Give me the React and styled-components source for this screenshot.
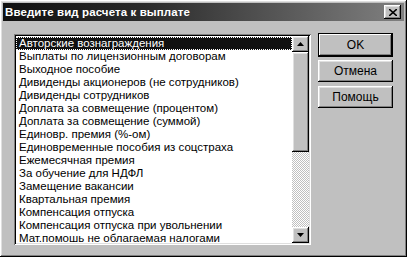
import React from 'react';
import styled, { createGlobalStyle } from 'styled-components';

const GlobalStyle = createGlobalStyle`
  html, body {
    margin: 0;
    padding: 0;
    background: #c0c0c0;
  }
  body {
    font-family: "Liberation Sans", Arial, sans-serif;
  }
`;

const items = [
  'Авторские вознаграждения',
  'Выплаты по лицензионным договорам',
  'Выходное пособие',
  'Дивиденды акционеров (не сотрудников)',
  'Дивиденды сотрудников',
  'Доплата за совмещение (процентом)',
  'Доплата за совмещение (суммой)',
  'Единовр. премия (%-ом)',
  'Единовременные пособия из соцстраха',
  'Ежемесячная премия',
  'За обучение для НДФЛ',
  'Замещение вакансии',
  'Квартальная премия',
  'Компенсация отпуска',
  'Компенсация отпуска при увольнении',
  'Мат.помошь не облагаемая налогами',
];

// raised 3d edge, win95 style
const raised = `
  box-shadow: inset -1px -1px 0 #000, inset 1px 1px 0 #fff,
    inset -2px -2px 0 #808080, inset 2px 2px 0 #dfdfdf;
`;

const Dialog = styled.div`
  box-sizing: border-box;
  width: 407px;
  height: 257px;
  background: #c0c0c0;
  padding: 3px;
  display: flex;
  flex-direction: column;
  ${raised}
`;

const TitleBar = styled.div`
  height: 18px;
  display: flex;
  align-items: center;
  justify-content: space-between;
  padding: 0 3px 0 2px;
  background: linear-gradient(to right, #101010 0%, #2a2a2a 35%, #808080 100%);
`;

const Title = styled.span`
  color: #fff;
  font-weight: bold;
  font-size: 11.5px;
  letter-spacing: 0.1px;
`;

const CloseButton = styled.div`
  box-sizing: border-box;
  width: 17px;
  height: 14px;
  background: #c0c0c0;
  display: flex;
  align-items: center;
  justify-content: center;
  ${raised}
`;

const Body = styled.div`
  display: flex;
  gap: 7px;
  padding: 13px 10px 0 11px;
`;

const ListBox = styled.div`
  box-sizing: border-box;
  width: 297px;
  height: 211px;
  display: flex;
  background: #fff;
  padding: 2px;
  box-shadow: inset 1px 1px 0 #808080, inset -1px -1px 0 #fff,
    inset 2px 2px 0 #000, inset -2px -2px 0 #dfdfdf;
`;

const Rows = styled.div`
  flex: 1;
  overflow: hidden;
  padding-top: 1px;
`;

const Row = styled.div`
  height: 13px;
  line-height: 13px;
  font-size: 11.5px;
  padding-left: 3px;
  white-space: nowrap;
  color: ${({ selected }) => (selected ? '#fff' : '#000')};
  background: ${({ selected }) => (selected ? '#101010' : 'transparent')};
  outline: ${({ selected }) => (selected ? '1px dotted #fff' : 'none')};
  outline-offset: -1px;
`;

const ScrollBar = styled.div`
  width: 17px;
  display: flex;
  flex-direction: column;
`;

const ScrollButton = styled.div`
  box-sizing: border-box;
  height: 16px;
  background: #c0c0c0;
  display: flex;
  align-items: center;
  justify-content: center;
  ${raised}
`;

const Thumb = styled.div`
  box-sizing: border-box;
  height: 100px;
  background: #c0c0c0;
  ${raised}
`;

const Track = styled.div`
  flex: 1;
  background: repeating-conic-gradient(#fff 0 25%, #c0c0c0 0 50%) 0 0 / 2px 2px;
`;

const Buttons = styled.div`
  display: flex;
  flex-direction: column;
  gap: 3px;
  margin-top: -1px;
`;

const Button = styled.div`
  box-sizing: border-box;
  width: 75px;
  height: ${({ primary }) => (primary ? '24px' : '22px')};
  margin-bottom: ${({ primary }) => (primary ? '0' : '1px')};
  background: #c0c0c0;
  font-size: 12px;
  display: flex;
  align-items: center;
  justify-content: center;
  color: #000;
  box-shadow: ${({ primary }) =>
    primary
      ? 'inset 0 0 0 1px #000, inset -2px -2px 0 #000, inset 2px 2px 0 #fff, inset -3px -3px 0 #808080'
      : 'inset -1px -1px 0 #000, inset 1px 1px 0 #fff, inset -2px -2px 0 #808080, inset 2px 2px 0 #dfdfdf'};
`;

const Arrow = ({ down }) => (
  <svg width="7" height="4" viewBox="0 0 7 4">
    <path d={down ? 'M0 0h7L3.5 4z' : 'M3.5 0L7 4H0z'} fill="#000" />
  </svg>
);

const App = () => (
  <>
    <GlobalStyle />
    <Dialog>
      <TitleBar>
        <Title>Введите вид расчета к выплате</Title>
        <CloseButton>
          <svg width="8" height="7" viewBox="0 0 8 7">
            <path d="M0 0L8 7M8 0L0 7" stroke="#000" strokeWidth="1.6" />
          </svg>
        </CloseButton>
      </TitleBar>
      <Body>
        <ListBox>
          <Rows>
            {items.map((t, i) => (
              <Row key={t} selected={i === 0}>
                {t}
              </Row>
            ))}
          </Rows>
          <ScrollBar>
            <ScrollButton>
              <Arrow />
            </ScrollButton>
            <Thumb />
            <Track />
            <ScrollButton>
              <Arrow down />
            </ScrollButton>
          </ScrollBar>
        </ListBox>
        <Buttons>
          <Button primary>OK</Button>
          <Button>Отмена</Button>
          <Button>Помощь</Button>
        </Buttons>
      </Body>
    </Dialog>
  </>
);

export default App;
